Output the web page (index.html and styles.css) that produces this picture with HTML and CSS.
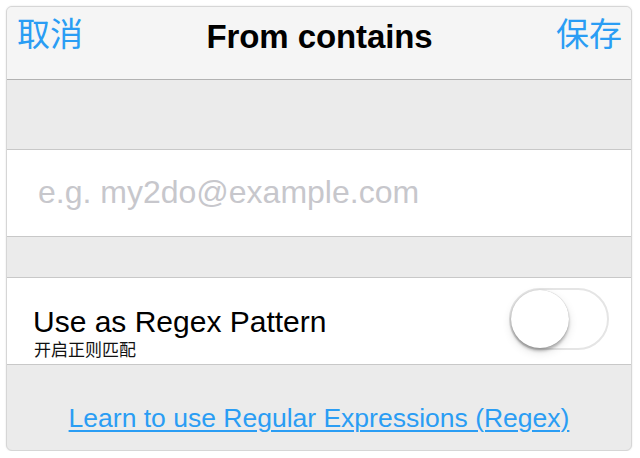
FILE: index.html
```html
<!DOCTYPE html>
<html lang="zh">
<head>
<meta charset="utf-8">
<title>From contains</title>
<link rel="stylesheet" href="styles.css">
</head>
<body>
<div class="card">
  <header class="nav">
    <span class="nav-btn">取消</span>
    <span class="nav-title">From contains</span>
    <span class="nav-btn">保存</span>
  </header>
  <div class="gap gap-top"></div>
  <div class="row input-row">
    <span class="placeholder">e.g. my2do@example.com</span>
  </div>
  <div class="gap gap-mid"></div>
  <div class="row toggle-row">
    <div class="labels">
      <div class="label">Use as Regex Pattern</div>
      <div class="sublabel">开启正则匹配</div>
    </div>
    <div class="switch"><div class="knob"></div></div>
  </div>
  <div class="footer">
    <a class="link" href="#">Learn to use Regular Expressions (Regex)</a>
  </div>
</div>
</body>
</html>
```
FILE: styles.css
```css
html, body {
  margin: 0;
  padding: 0;
  background: #ffffff;
}
body {
  padding: 6px 8px 0 6px;
  font-family: "Liberation Sans", "Noto Sans CJK SC", sans-serif;
}
.card {
  width: 624px;
  height: 443px;
  border: 1px solid #d6d6d6;
  border-radius: 6px;
  box-shadow: 0 0 2px rgba(0,0,0,0.12);
  overflow: hidden;
  background: #ebebeb;
  display: flex;
  flex-direction: column;
}
.nav {
  height: 72px;
  flex: none;
  background: #f5f5f5;
  border-bottom: 1px solid #b2b2b2;
  display: flex;
  align-items: flex-start;
  justify-content: space-between;
  padding: 0 9px 0 10px;
  box-sizing: content-box;
}
.nav-btn {
  font-family: "Noto Sans CJK SC", sans-serif;
  font-size: 33px;
  line-height: 33px;
  margin-top: 9px;
  color: #2a9df4;
}
.nav-title {
  font-size: 33px;
  font-weight: bold;
  line-height: 33px;
  margin-top: 13px;
  color: #000;
  letter-spacing: -0.1px;
}
.gap {
  flex: none;
  background: #ebebeb;
  border-bottom: 1px solid #c8c8c8;
}
.gap-top { height: 69px; }
.gap-mid { height: 40px; }
.row {
  flex: none;
  height: 86px;
  background: #ffffff;
  border-bottom: 1px solid #c8c8c8;
  display: flex;
  align-items: center;
}
.input-row {
  padding-left: 31px;
}
.placeholder {
  font-size: 32px;
  color: #c7c7cc;
  margin-top: -2px;
}
.toggle-row {
  padding: 0 22px 0 26px;
  justify-content: space-between;
}
.labels {
  margin-top: 22px;
}
.label {
  font-size: 30px;
  line-height: 30px;
  color: #000;
}
.sublabel {
  font-family: "Noto Sans CJK SC", sans-serif;
  font-size: 17px;
  line-height: 18px;
  color: #111;
  margin-top: 3px;
  margin-left: 1px;
}
.switch {
  width: 96px;
  height: 58px;
  border: 2px solid #e5e5e5;
  border-radius: 31px;
  background: #fff;
  position: relative;
  margin-top: -4px;
}
.knob {
  position: absolute;
  left: 0;
  top: 0;
  width: 58px;
  height: 58px;
  border-radius: 50%;
  background: #fff;
  box-shadow: 0 3px 3px rgba(0,0,0,0.25), 0 4px 10px rgba(0,0,0,0.12), 0 0 1px rgba(0,0,0,0.3);
}
.footer {
  flex: 1;
  display: flex;
  justify-content: center;
  padding-top: 38px;
}
.link {
  font-size: 26.5px;
  line-height: 30px;
  height: 30px;
  color: #2a9df4;
  text-decoration: underline;
  text-decoration-thickness: 2px;
  text-underline-offset: 3px;
}
```
